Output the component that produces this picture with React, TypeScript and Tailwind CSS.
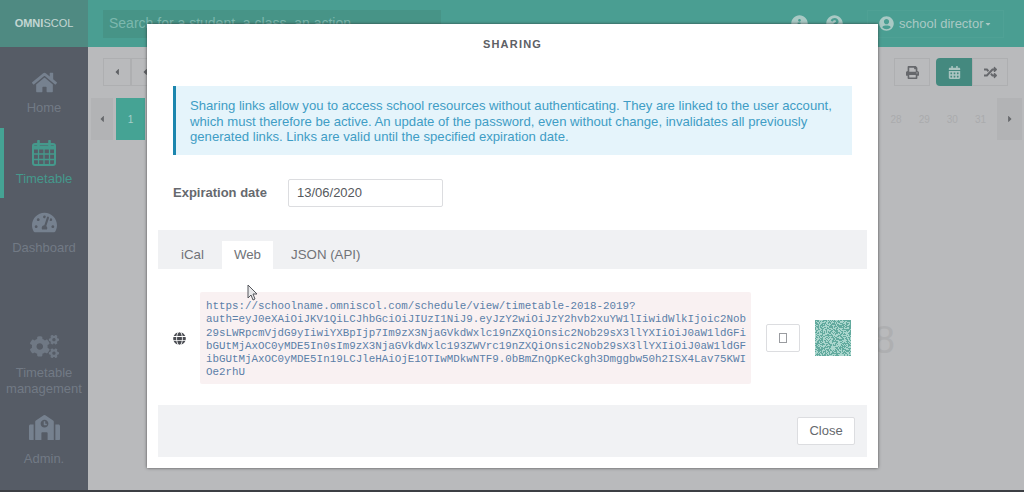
import React from 'react';
import {
  FaHome, FaTachometerAlt, FaCogs, FaSchool, FaGlobe, FaPrint, FaRandom, FaCalendarAlt,
  FaInfoCircle, FaQuestionCircle, FaUserCircle, FaCaretLeft, FaCaretRight, FaCaretDown,
} from 'react-icons/fa';

const tokenLines = [
  'https://schoolname.omniscol.com/schedule/view/timetable-2018-2019?',
  'auth=eyJ0eXAiOiJKV1QiLCJhbGciOiJIUzI1NiJ9.eyJzY2wiOiJzY2hvb2xuYW1lIiwidWlkIjoic2Nob',
  '29sLWRpcmVjdG9yIiwiYXBpIjp7Im9zX3NjaGVkdWxlc19nZXQiOnsic2Nob29sX3llYXIiOiJ0aW1ldGFi',
  'bGUtMjAxOC0yMDE5In0sIm9zX3NjaGVkdWxlc193ZWVrc19nZXQiOnsic2Nob29sX3llYXIiOiJ0aW1ldGF',
  'ibGUtMjAxOC0yMDE5In19LCJleHAiOjE1OTIwMDkwNTF9.0bBmZnQpKeCkgh3Dmggbw50h2ISX4Lav75KWI',
  'Oe2rhU',
];

// noise for the qr code
let seed = 12345;
const qrCells = Array.from({ length: 48 * 48 }, () => {
  seed ^= seed << 13;
  seed ^= seed >>> 17;
  seed ^= seed << 5;
  return (seed >>> 0) % 100 < 50;
});

const CalendarIcon = () => (
  <svg width="24" height="26" viewBox="0 0 24 26" fill="none" stroke="currentColor">
    <rect x="1" y="4" width="22" height="21" rx="2" strokeWidth="2" />
    <path d="M1 6h22v3H1z" fill="currentColor" />
    <path d="M1 14h22M1 19.500h22M6.500 9v16M12 9v16M17.500 9v16" strokeWidth="1.300" />
    <path d="M6.500 1v5M17.500 1v5" strokeWidth="2.600" strokeLinecap="round" />
  </svg>
);

const SideItem = ({ icon, label, active, gap }: { icon: React.ReactNode; label: React.ReactNode; active?: boolean; gap: string }) => (
  <div className={`h-[70px] flex flex-col items-center justify-center border-l-4 pr-1 ${gap} ${active ? 'border-[#45a394] text-[#45998c]' : 'border-transparent text-[#727a85]'}`}>
    {icon}
    <span className="text-[13px] leading-[16px] text-center">{label}</span>
  </div>
);

const Tab = ({ label, active }: { label: string; active?: boolean }) => (
  <div className={`h-7 px-3 flex items-center text-[13.300px] ${active ? 'bg-white text-[#707378]' : 'text-[#707378]'}`}>{label}</div>
);

export default function App() {
  return (
    <div className="relative w-[1024px] h-[492px] overflow-hidden flex flex-col bg-[#b9babc] font-['Liberation_Sans',Arial,sans-serif]">
      <div className="h-[47px] flex shrink-0 bg-[#4a9e92]">
        <div className="w-[88px] flex items-center justify-center bg-[#4f8a82] text-[11px] text-[#c3d6d3]">
          <b>OMNI</b>SCOL
        </div>
        <div className="flex-1 flex items-center pl-[15px] pr-5">
          <div className="w-[338px] h-7 bg-[#479487] text-[#7cb8ae] text-[14px] px-1.5 flex items-center">Search for a student, a class, an action</div>
          <div className="ml-auto flex items-center gap-[18px] text-[#a9c9c4] text-[17px]">
            <FaInfoCircle />
            <FaQuestionCircle />
            <div className="ml-[6px] w-[137px] h-7 border border-[#4fa195] flex items-center gap-[5px] px-[11px] text-[13px]">
              <FaUserCircle className="text-[15px] shrink-0" />
              <span className="whitespace-nowrap">school director</span>
              <FaCaretDown className="text-[8px] -ml-[5px] shrink-0" />
            </div>
          </div>
        </div>
      </div>

      <div className="flex-1 flex min-h-0">
        <div className="w-[88px] bg-[#565c66] pt-[11px] shrink-0 flex flex-col">
          <SideItem gap="gap-[5px]" icon={<FaHome className="text-[25px] text-[#76818f]" />} label="Home" />
          <SideItem gap="gap-[5px]" active icon={<CalendarIcon />} label="Timetable" />
          <SideItem gap="gap-[5px]" icon={<FaTachometerAlt className="text-[25px] text-[#76818f]" />} label="Dashboard" />
          <div className="mt-[61px]">
            <SideItem gap="gap-[4px]" icon={<FaCogs className="text-[29px] text-[#6f7884]" />} label={<>Timetable<br />management</>} />
          </div>
          <div className="mt-[5px]">
            <SideItem gap="gap-[8px]" icon={<FaSchool className="text-[31px] text-[#76818f]" />} label="Admin." />
          </div>
        </div>

        <div className="flex-1 px-[15px] pt-[11px] min-w-0 flex flex-col">
          <div className="flex items-center">
            <div className="w-7 h-7 border border-[#aeafb1] flex items-center justify-center text-[#5f6165] text-[10px]"><FaCaretLeft /></div>
            <div className="w-7 h-7 border border-[#aeafb1] flex items-center justify-center text-[#5f6165] text-[10px]"><FaCaretLeft /></div>
            <div className="ml-auto w-9 h-7 border border-[#aeafb1] flex items-center justify-center text-[#66686c] text-[13px]"><FaPrint /></div>
            <div className="ml-[6px] w-9 h-7 bg-[#44897f] rounded-l-sm flex items-center justify-center text-[#a9c4c0] text-[13px]"><FaCalendarAlt /></div>
            <div className="mr-px w-9 h-7 border border-[#aeafb1] flex items-center justify-center text-[#66686c] text-[13px]"><FaRandom /></div>
          </div>
          <div className="mt-3 -ml-[12px] -mr-[13px] h-[42px] flex items-center text-[10px] text-[#aaabad]">
            <div className="w-[22px] self-stretch flex items-center justify-center text-[#66686c] bg-[#b2b3b5]"><FaCaretLeft /></div>
            <div className="ml-[3px] w-[29px] self-stretch flex items-center justify-center bg-[#45a394] text-[#a8d0ca]">1</div>
            <div className="ml-auto flex items-center gap-[17px] pr-[11px]">
              <span>28</span><span>29</span><span>30</span><span>31</span>
            </div>
            <div className="w-[25px] self-stretch flex items-center justify-center text-[#66686c] bg-[#b2b3b5]"><FaCaretRight /></div>
          </div>
          <div className="flex-1 flex items-center justify-end pr-[114px] pt-[50px] text-[38px] text-[#aeafb1]">8</div>
        </div>
      </div>
      <div className="h-[2px] bg-[#3c3f44] shrink-0" />

      <div className="absolute left-[147px] top-[24px] w-[731px] h-[444px] bg-white shadow-[0_0_3px_rgba(40,40,40,0.75)] px-[11px] flex flex-col">
        <div className="h-[62px] pt-[14px] text-center text-[11px] leading-[13px] font-bold tracking-[1.200px] text-[#5d6065] shrink-0">SHARING</div>
        <div className="mx-[15px] h-[69px] bg-[#e5f4fb] border-l-[3px] border-[#1c86ae] pl-[14px] pt-[12px] text-[13.130px] leading-[15.500px] text-[#3f9dc5] shrink-0 whitespace-nowrap">
          Sharing links allow you to access school resources without authenticating. They are linked to the user account,<br />
          which must therefore be active. An update of the password, even without change, invalidates all previously<br />
          generated links. Links are valid until the specified expiration date.
        </div>
        <div className="mt-6 mx-[15px] flex items-center shrink-0">
          <span className="w-[115px] text-[13px] font-bold text-[#66696e]">Expiration date</span>
          <div className="w-[155px] h-7 border border-[#dcdde0] rounded-[2px] px-2 flex items-center text-[13px] text-[#55585c]">13/06/2020</div>
        </div>
        <div className="mt-[23px] h-[39px] bg-[#f0f1f3] pl-[11px] flex items-end gap-[6px] shrink-0">
          <Tab label="iCal" />
          <Tab active label="Web" />
          <Tab label="JSON (API)" />
        </div>
        <div className="mt-[23px] flex items-center shrink-0">
          <FaGlobe className="ml-[15px] text-[13px] text-[#4a4c52] w-[13px] shrink-0" />
          <div className="ml-[14px] w-[551px] h-[92px] bg-[#f9f1f2] pl-[6px] pt-[8px] font-['Liberation_Mono',monospace] text-[10.850px] leading-[13.300px] text-[#5b7fa8] whitespace-pre rounded-[2px]">
            {tokenLines.map(l => <div key={l}>{l}</div>)}
          </div>
          <div className="ml-[15px] w-[34px] h-7 border border-[#dcdde0] rounded-[2px] flex items-center justify-center">
            <div className="w-2 h-[10px] border border-[#9a9ca0]" />
          </div>
          <svg className="ml-[15px] w-9 h-9 shrink-0" viewBox="0 0 48 48" shapeRendering="crispEdges">
            <rect width="48" height="48" fill="#aad6cd" />
            {qrCells.map((on, i) => on && <rect key={i} x={i % 48} y={Math.floor(i / 48)} width="1" height="1" fill="#62aa9e" />)}
          </svg>
        </div>
        <div className="mt-[21px] h-[52px] bg-[#f1f2f4] flex items-center justify-end pr-[12px] shrink-0">
          <div className="w-[58px] h-7 bg-white border border-[#dcdde0] rounded-[2px] flex items-center justify-center text-[13px] text-[#66696e]">Close</div>
        </div>
      </div>

      <svg className="absolute left-[247px] top-[284px] w-[12px] h-[18px]" viewBox="0 0 12 18">
        <path d="M1 1v13l3-3 2 5 2-1-2-5h4z" fill="#e8e8ea" stroke="#55575c" strokeWidth="1" />
      </svg>
    </div>
  );
}
